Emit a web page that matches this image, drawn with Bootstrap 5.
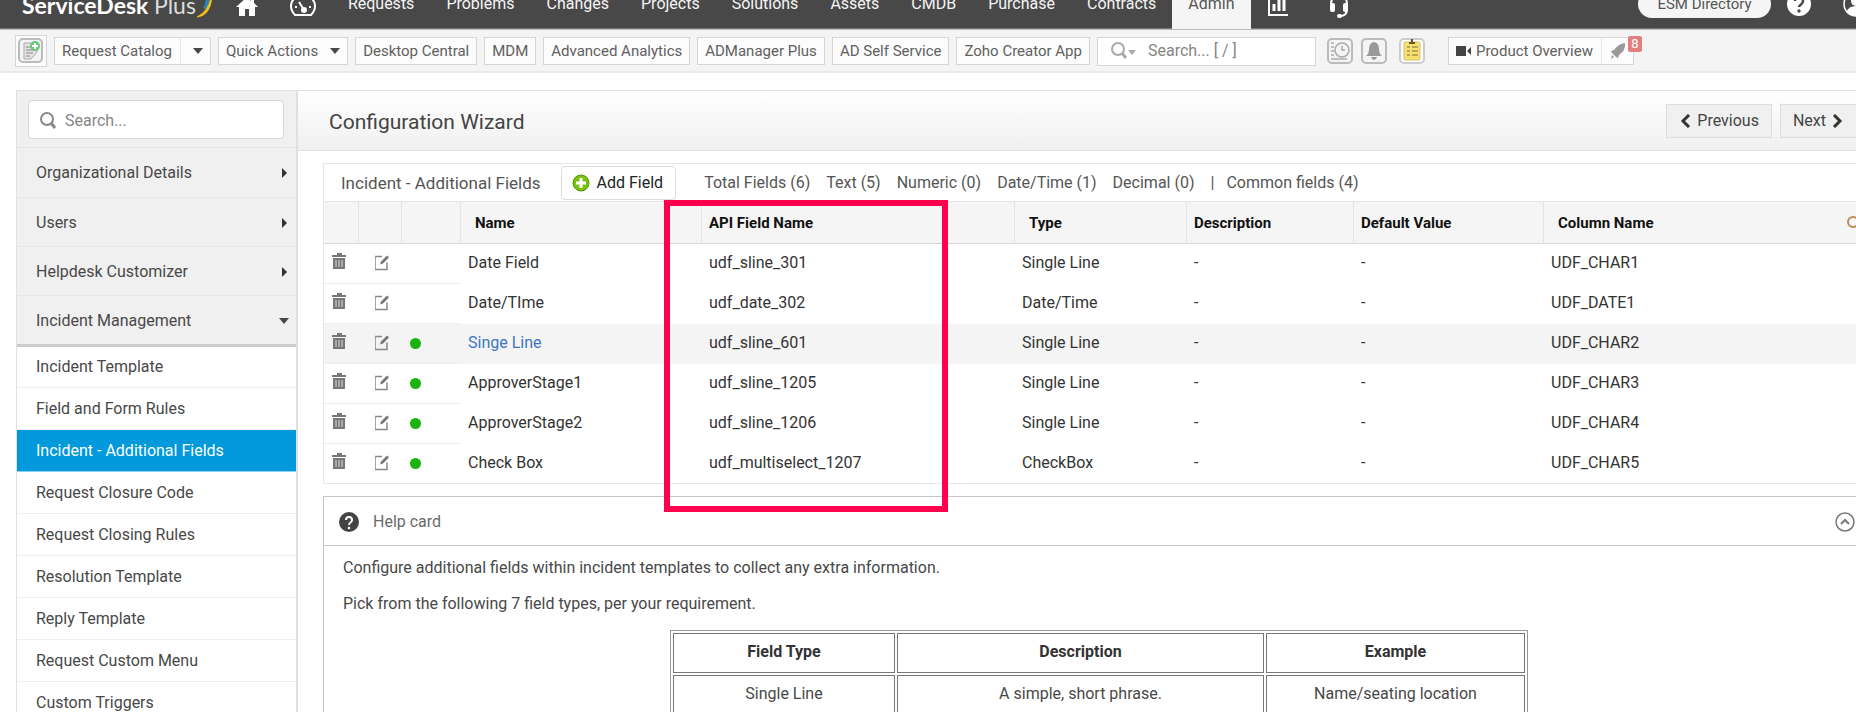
<!DOCTYPE html>
<html lang="en">
<head>
<meta charset="utf-8">
<meta name="viewport" content="width=device-width, initial-scale=1">
<title>Configuration Wizard - ServiceDesk Plus</title>
<link href="https://cdn.jsdelivr.net/npm/bootstrap@5.3.0/dist/css/bootstrap.min.css" rel="stylesheet">
<style>
body{font-family:Roboto,"Liberation Sans",sans-serif;font-size:16px;line-height:20px;color:#484848;background:#fff;overflow:hidden;height:100vh}
svg{display:block;flex:none}
a{text-decoration:none;color:inherit}
/* top navigation, scrolled partly out of view */
.topnav{background:#484848;height:50px;margin-top:-21px;padding-left:22px;border-bottom:1px solid #777;flex-wrap:nowrap}
.brand-name{font-family:Lato,sans-serif;font-size:23px;line-height:28px;color:#fff;font-weight:700;padding-top:3px;white-space:nowrap}
.brand-name span{font-weight:400;color:#ddd}
.topnav .nav-link{color:#f5f5f5;padding:0 16px;line-height:50px;white-space:nowrap}
.topnav .nav-link.active{background:#f5f5f5;color:#555}
.esm{background:#f5f5f5;color:#555;border-radius:16px;height:28px;width:133px;border:0;padding:0;font-size:15px}
.toolbar{background:#f4f4f4;height:44px;border-top:1px solid #bbb;border-bottom:2px solid #e9e9e9;padding:1px 15px 0;gap:7px}
.tool{background:#fcfcfc;border:1px solid #d6d6d6;border-radius:0;color:#606060;height:28px;padding:0 7px;font-size:15px;line-height:26px;white-space:nowrap}
.tool:hover{background:#fff}
.tool-icon{width:32px;height:32px;padding:0}
.caret{width:0;height:0;border:5px solid transparent;border-top:6px solid #484848;border-bottom:0;display:inline-block}
.tool .caret{margin-left:12px}
.vsep{border-left:1px solid #e8e8e8;align-self:stretch}
.quick{border:1px solid #d6d6d6;background:#fff;height:29px;width:219px;padding-left:12px}
.quick input,.side-search input{border:0;background:none;outline:0;min-width:0;width:100%;color:#666;padding:0}
::placeholder{color:#858585!important;opacity:1}
.icobtn{padding:0;border:0;background:none}
.count{position:absolute;top:-2px;right:-9px;width:14px;height:16px;background:#e47f7f;color:#fff;border-radius:2px;font-size:13px;line-height:16px;text-align:center}
/* sidebar */
.page-row{margin:17px 0 0 16px}
.sidebar{width:282px;flex:none;border:1px solid #e0e0e0;border-width:1px 2px 0 1px;background:#fff}
.side-search-wrap{background:#f0f0f0;height:57px;padding:9px 12px 0 11px;border-bottom:1px solid #e4e4e4}
.side-search{background:#fff;border:1px solid #d8d8d8;border-radius:4px;height:39px;padding:2px 0 0 10px;gap:8px}
.group-link{background:#f0f0f0;height:49px;border-bottom:1px solid #e6e6e6;padding:1px 9px 0 19px}
.group-link.first{height:50px}
.group-link.open{border-bottom:3px solid #ccc;height:51px;padding-right:7px}
.rcaret{width:0;height:0;border:5px solid transparent;border-left:5px solid #333;border-right:0}
.item-link{display:block;height:42px;line-height:42px;padding-left:19px;border-bottom:1px solid #f0f0f0}
.item-link.first{height:41px;line-height:39px}
.item-link.active{background:#0099dc;color:#fff;border-color:#8fd0f0}
/* main column runs past the right window edge */
.main{min-width:0;margin-right:-19px}
.wizard-head{height:61px;border:1px solid #e2e2e2;border-width:1px 0;background:linear-gradient(#fff,#f0f0f0);padding:0 19px 0 31px}
.wizard-head h1{font-size:21px;line-height:24px;font-weight:400;margin:0;padding-top:2px;color:#444}
.step{background:#f0f0f0;border:1px solid #ddd;height:34px;color:#444;padding:0 12px;gap:6px}
.content{padding:12px 0 0 25px}
.fields{border-left:1px solid #e6e6e6;position:relative}
.fields-head{height:39px;border-top:1px solid #e6e6e6;border-bottom:1px solid #e6e6e6;padding-left:17px;color:#555}
.fields-title{font-size:17px}
.add-btn{background:#fff;border:1px solid #dcdcdc;border-radius:4px;height:34px;padding:0 12px 0 10px;gap:7px;color:#222}
.fields table{table-layout:fixed;width:100%;border-collapse:separate;border-spacing:0;color:#333}
.fields th{background:#f5f5f5;height:42px;border-right:1px solid #e4e4e4;border-bottom:1px solid #d6d6d6;font-size:15px;font-weight:700;color:#111;padding:0 0 0 7px}
.fields th:last-child{border-right:0}
.fields th.wide{padding-left:14px}
.fields td{height:40px;padding:0 0 2px 7px}
.fields td.ic{border-bottom:1px solid #eee;padding:0}
.fields td.low{padding-top:3px}
.fields tr.hov td{background:#f4f4f4}
.fields tr:last-child td{border-bottom:1px solid #e6e6e6}
.named{color:#3b76c4}
.dot{width:11px;height:11px;border-radius:50%;background:#19b30c;display:block;margin-left:8px}
.marker{position:absolute;left:340px;top:37px;width:284px;height:312px;border:6px solid #ff004f;pointer-events:none}
.help-box{border:1px solid #c6c6c6;margin-top:12px}
.help-head{height:49px;border-bottom:1px solid #c6c6c6;padding:2px 19px 0 14px;color:#6a6a6a}
.help-title{margin-left:13px}
.help-box p{margin:0 0 16px 19px}
.help-body{padding-top:12px}
.doc{border:1px solid #999;border-collapse:separate;border-spacing:2px;width:858px;margin:0 auto;text-align:center}
.doc th,.doc td{border:1px solid #777;height:40px;padding:0 0 2px}
.doc th{font-weight:700;color:#333}
</style>
</head>
<body>
<nav class="topnav d-flex align-items-center">
  <a href="#" class="brand-name">ServiceDesk <span>Plus</span></a>
  <svg width="16" height="28" viewBox="0 0 16 28"><path d="M9 0Q14 10 9 19" stroke="#2785b5" stroke-width="4" fill="none"/><path d="M15 7Q13 21 1 27Q14 26 16 7Z" fill="#f2c311" stroke="#f2c311"/></svg>
  <a href="#" aria-label="Home" class="ms-4"><svg width="22" height="28" viewBox="0 0 22 28"><path d="M11 7L0 17h3v9h6v-7h4v7h6v-9h3l-4-4V8h-3v3z" fill="#fff"/></svg></a>
  <a href="#" aria-label="Dashboard" class="mx-3 ps-3"><svg width="26" height="28" viewBox="0 0 26 28" fill="none" stroke="#fff" stroke-width="2"><path d="M5 25Q1 21 1 16a12 11 0 0124 0q0 5-4 9z"/><path d="M9 12l5 8M5 17h2M19 17h2M13 8v2"/><circle cx="14" cy="20" r="2" fill="#fff"/></svg></a>
  <div class="nav flex-nowrap">
    <a class="nav-link" href="#">Requests</a><a class="nav-link" href="#">Problems</a><a class="nav-link" href="#">Changes</a><a class="nav-link" href="#">Projects</a><a class="nav-link" href="#">Solutions</a><a class="nav-link" href="#">Assets</a><a class="nav-link" href="#">CMDB</a><a class="nav-link" href="#">Purchase</a><a class="nav-link" href="#">Contracts</a><a class="nav-link active" href="#">Admin</a>
  </div>
  <a href="#" aria-label="Reports" class="ms-3"><svg width="22" height="28" viewBox="0 0 22 28" fill="none" stroke="#fff" stroke-width="2"><path d="M2 4v21h19"/><path d="M7 14v7M12 8v13M17 8v13" stroke-width="3"/></svg></a>
  <a href="#" aria-label="Support" class="ms-4 ps-3"><svg width="20" height="30" viewBox="0 0 20 30"><path d="M2 15a8 9 0 0116 0v5q0 7-7 7" fill="none" stroke="#fff" stroke-width="2"/><rect x="1" y="14" width="5" height="9" rx="2" fill="#fff"/><rect x="14" y="14" width="5" height="9" rx="2" fill="#fff"/><rect x="8" y="25" width="5" height="4" rx="2" fill="#fff"/></svg></a>
  <button class="esm ms-auto">ESM Directory</button>
  <a href="#" aria-label="Help" class="mx-3"><svg width="24" height="26" viewBox="0 0 24 26"><circle cx="12" cy="13" r="12" fill="#fff"/><path d="M8 10q0-4 4-4t4 4q0 2-2 3.500T12 16" fill="none" stroke="#484848" stroke-width="2.500"/><circle cx="12" cy="20" r="1.700" fill="#484848"/></svg></a>
  <a href="#" aria-label="Account" class="ms-3"><svg width="13" height="26" viewBox="0 0 13 26"><circle cx="13" cy="13" r="12" fill="none" stroke="#fff" stroke-width="1.500"/><circle cx="13" cy="10" r="5" fill="#fff"/><path d="M3 21q3-6 10-6t10 6q-4 4-10 4T3 21" fill="#fff"/></svg></a>
</nav>
<div class="toolbar d-flex align-items-center">
  <button class="tool tool-icon d-flex align-items-center justify-content-center" aria-label="New request"><svg width="26" height="26" viewBox="0 0 26 26"><rect x="1" y="1" width="23" height="23" rx="4" fill="#f4f4f4" stroke="#bbb" stroke-width="2"/><path d="M6 5h13v9l-6 7H6z" fill="#e4e4e4" stroke="#aaa"/><path d="M8 9h7M8 12h9M8 15h7M8 18h4" stroke="#888"/><circle cx="17" cy="8" r="5" fill="#69ca7c"/><path d="M14 8h6M17 5v6" stroke="#fff" stroke-width="2"/></svg></button>
  <button class="tool d-flex align-items-center">Request Catalog<span class="vsep ms-2"></span><span class="caret"></span></button>
  <button class="tool d-flex align-items-center">Quick Actions<span class="caret"></span></button>
  <button class="tool">Desktop Central</button>
  <button class="tool">MDM</button>
  <button class="tool">Advanced Analytics</button>
  <button class="tool">ADManager Plus</button>
  <button class="tool">AD Self Service</button>
  <button class="tool">Zoho Creator App</button>
  <label class="quick d-flex align-items-center"><svg width="26" height="20" viewBox="0 0 26 20"><circle cx="8" cy="8" r="6" fill="none" stroke="#aaa" stroke-width="2"/><path d="M12 12l4 5" stroke="#aaa" stroke-width="3"/><path d="M18 9h8l-4 5z" fill="#aaa"/></svg><input class="ms-2 ps-1" placeholder="Search... [ / ]" aria-label="Search"></label>
  <div class="d-flex gap-2 ms-1">
    <button class="icobtn" aria-label="History"><svg width="26" height="26" viewBox="0 0 26 26" fill="none" stroke="#aaa"><rect x="1" y="1" width="24" height="24" rx="4" stroke="#bbb" stroke-width="2"/><circle cx="15" cy="12" r="7" stroke-width="1.500"/><path d="M15 8v4h3M4 5h3M4 9h3M4 13h3M4 17h3M4 21h16" stroke-width="1.500"/></svg></button>
    <button class="icobtn" aria-label="Notifications"><svg width="26" height="26" viewBox="0 0 26 26"><rect x="1" y="1" width="24" height="24" rx="4" fill="none" stroke="#bbb" stroke-width="2"/><path d="M13 4q5 1 5 7 0 5 3 7H5q3-2 3-7 0-6 5-7M10 19h6q-1 3-3 3t-3-3" fill="#999"/></svg></button>
    <button class="icobtn ms-1" aria-label="Tasks"><svg width="26" height="26" viewBox="0 0 26 26"><rect x="1" y="1" width="24" height="24" rx="4" fill="#fff" stroke="#ccc" stroke-width="2"/><rect x="5" y="4" width="16" height="18" rx="1" fill="#f5e170" stroke="#d8c468"/><path d="M8 9h3m2 0h6M8 13h3m2 0h6M8 17h3m2 0h6" stroke="#a8944a" stroke-width="1.500"/><path d="M13 1v4M10 5h6" stroke="#665320" stroke-width="2"/></svg></button>
  </div>
  <button class="tool d-flex align-items-center position-relative ms-3"><svg width="16" height="12" viewBox="0 0 16 12"><path d="M0 1h10v10H0zM15 2v8l-4-4z" fill="#444"/></svg><span class="ms-1 me-2">Product Overview</span><span class="vsep me-2"></span><svg width="16" height="18" viewBox="0 0 16 18"><path d="M15 1Q8 2 4 8l-3 1 1 2 4 4 2 1 1-3Q16 8 15 1M2 13l-1 4 3-2z" fill="#999"/></svg><span class="count">8</span></button>
</div>

<div class="page-row d-flex">
  <aside class="sidebar">
    <div class="side-search-wrap"><label class="side-search d-flex align-items-center"><svg width="18" height="20" viewBox="0 0 18 20"><circle cx="8" cy="8" r="6" fill="none" stroke="#888" stroke-width="2"/><path d="M12 12l4 5" stroke="#888" stroke-width="3"/></svg><input placeholder="Search..." aria-label="Search settings"></label></div>
    <a href="#" class="group-link first d-flex align-items-center justify-content-between">Organizational Details<span class="rcaret"></span></a>
    <a href="#" class="group-link d-flex align-items-center justify-content-between">Users<span class="rcaret"></span></a>
    <a href="#" class="group-link d-flex align-items-center justify-content-between">Helpdesk Customizer<span class="rcaret"></span></a>
    <a href="#" class="group-link open d-flex align-items-center justify-content-between">Incident Management<span class="caret"></span></a>
    <a href="#" class="item-link first">Incident Template</a>
    <a href="#" class="item-link">Field and Form Rules</a>
    <a href="#" class="item-link active">Incident - Additional Fields</a>
    <a href="#" class="item-link">Request Closure Code</a>
    <a href="#" class="item-link">Request Closing Rules</a>
    <a href="#" class="item-link">Resolution Template</a>
    <a href="#" class="item-link">Reply Template</a>
    <a href="#" class="item-link">Request Custom Menu</a>
    <a href="#" class="item-link">Custom Triggers</a>
  </aside>
  <main class="main flex-grow-1">
    <header class="wizard-head d-flex align-items-center">
      <h1>Configuration Wizard</h1>
      <button class="step d-flex align-items-center ms-auto me-2"><svg width="12" height="14" viewBox="0 0 12 14"><path d="M10 1L4 7l6 6" fill="none" stroke="#333" stroke-width="3"/></svg>Previous</button>
      <button class="step d-flex align-items-center border-end-0">Next<svg width="12" height="14" viewBox="0 0 12 14"><path d="M2 1l6 6-6 6" fill="none" stroke="#333" stroke-width="3"/></svg></button>
    </header>
    <div class="content">
      <section class="fields">
        <div class="fields-head d-flex align-items-center">
          <span class="fields-title pe-1">Incident - Additional Fields</span>
          <button class="add-btn d-flex align-items-center ms-3"><svg width="18" height="18" viewBox="0 0 18 18"><circle cx="9" cy="9" r="8" fill="#7cc010" stroke="#4c9a08"/><path d="M9 4v10M4 9h10" stroke="#fff" stroke-width="3"/></svg>Add Field</button>
          <div class="d-flex gap-3 ms-4 ps-1"><span>Total Fields (6)</span><span>Text (5)</span><span>Numeric (0)</span><span>Date/Time (1)</span><span>Decimal (0)</span><span>|</span></div><span class="ms-2 ps-1">Common fields (4)</span>
        </div>
        <table>
          <colgroup><col style="width:35px"><col style="width:43px"><col style="width:59px"><col style="width:241px"><col style="width:313px"><col style="width:172px"><col style="width:167px"><col style="width:190px"><col></colgroup>
          <thead><tr><th></th><th></th><th></th><th class="wide">Name</th><th>API Field Name</th><th class="wide">Type</th><th>Description</th><th>Default Value</th><th class="wide"><span class="d-flex justify-content-between align-items-center pe-3">Column Name<svg width="12" height="14" viewBox="0 0 12 14"><circle cx="6" cy="6" r="5" fill="none" stroke="#b58d55" stroke-width="2"/></svg></span></th></tr></thead>
          <tbody id="rows"></tbody>
        </table>
        <div class="marker"></div>
      </section>
      <section class="help-box">
        <div class="help-head d-flex align-items-center"><svg width="22" height="22" viewBox="0 0 22 22"><circle cx="11" cy="11" r="10" fill="#444"/><path d="M8 9q0-3 3-3t3 3q0 1.500-1.500 2.500T11 14" fill="none" stroke="#fff" stroke-width="2"/><circle cx="11" cy="17" r="1.300" fill="#fff"/></svg><span class="help-title">Help card</span><button class="icobtn ms-auto" aria-label="Collapse"><svg width="20" height="20" viewBox="0 0 20 20" fill="none" stroke="#777"><circle cx="10" cy="10" r="9" stroke-width="1.500"/><path d="M6 12l4-4 4 4" stroke-width="2"/></svg></button></div>
        <div class="help-body">
        <p>Configure additional fields within incident templates to collect any extra information.</p>
        <p>Pick from the following 7 field types, per your requirement.</p>
        <table class="doc">
          <colgroup><col style="width:222px"><col><col style="width:259px"></colgroup>
          <tr><th>Field Type</th><th>Description</th><th>Example</th></tr>
          <tr><td>Single Line</td><td>A simple, short phrase.</td><td>Name/seating location</td></tr>
        </table>
        </div>
      </section>
    </div>
  </main>
</div>
<script src="https://cdn.jsdelivr.net/npm/bootstrap@5.3.0/dist/js/bootstrap.bundle.min.js"></script>
<script>
const trash='<button class="icobtn ms-2" aria-label="Delete"><svg width="14" height="17" viewBox="0 0 14 17"><path d="M5 1h4v2M0 3h14" stroke="#777" stroke-width="2" fill="none"/><path d="M1 5h12v11H1z" fill="#777"/><path d="M4 7v7M7 7v7M10 7v7" stroke="#ddd"/></svg></button>';
const edit='<button class="icobtn ms-3" aria-label="Edit"><svg width="15" height="17" viewBox="1 0 15 16" fill="none" stroke="#888" stroke-width="1.500"><path d="M8 2H1v13h12V8"/><path d="M6 10l1-3 6-6 2 2-6 6z" fill="#777" stroke="none"/></svg></button>';
const data=[["Date Field","udf_sline_301","Single Line","UDF_CHAR1"],["Date/TIme","udf_date_302","Date/Time","UDF_DATE1"],["Singe Line","udf_sline_601","Single Line","UDF_CHAR2",1],["ApproverStage1","udf_sline_1205","Single Line","UDF_CHAR3",1],["ApproverStage2","udf_sline_1206","Single Line","UDF_CHAR4",1],["Check Box","udf_multiselect_1207","CheckBox","UDF_CHAR5",1]];
document.getElementById("rows").innerHTML=data.map((r,i)=>`<tr class="${i===2?"hov":""}"><td class="ic">${trash}</td><td class="ic low">${edit}</td><td class="ic">${r[4]?'<span class="dot"></span>':""}</td><td>${i===2?`<a href="#" class="named">${r[0]}</a>`:r[0]}</td><td>${r[1]}</td><td>${r[2]}</td><td>-</td><td>-</td><td>${r[3]}</td></tr>`).join("");
</script>
</body>
</html>
